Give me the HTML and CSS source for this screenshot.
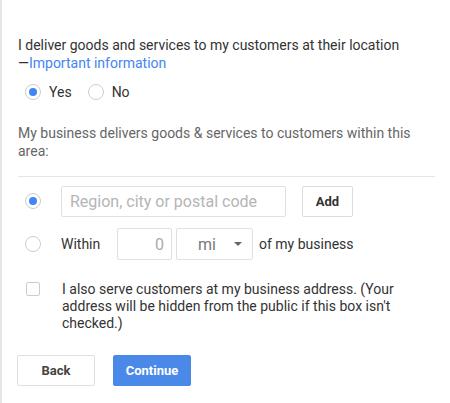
FILE: index.html
```html
<!DOCTYPE html>
<html lang="en">
<head>
  <meta charset="UTF-8" />
  <title>Service area</title>
  <link rel="stylesheet" href="styles.css">
</head>
<body>
  <div class="panel">
    <p class="question">I deliver goods and services to my customers at their location <span class="info">—<a href="#">Important information</a></span></p>

    <div class="choice-row">
      <label class="choice"><span class="radio checked"></span>Yes</label>
      <label class="choice"><span class="radio"></span>No</label>
    </div>

    <p class="hint">My business delivers goods &amp; services to customers within this area:</p>

    <div class="divider"></div>

    <div class="area-row">
      <span class="radio checked"></span>
      <input class="region" type="text" placeholder="Region, city or postal code" />
      <button class="btn add">Add</button>
    </div>

    <div class="area-row">
      <span class="radio"></span>
      <span class="within">Within</span>
      <input class="distance" type="text" value="0" />
      <div class="unit">mi <span class="caret"></span></div>
      <span class="suffix">of my business</span>
    </div>

    <div class="check-row">
      <span class="checkbox"></span>
      <p>I also serve customers at my business address. (Your address will be hidden from the public if this box isn't checked.)</p>
    </div>

    <div class="actions">
      <button class="btn back">Back</button>
      <button class="btn primary">Continue</button>
    </div>
  </div>
</body>
</html>
```

FILE: styles.css
```css
body {
  margin: 0;
  font-family: Roboto, 'Noto Sans', sans-serif;
  color: #333;
  background: #fff;
}
.panel {
  border-left: 2px solid #e6e6e6;
  min-height: 403px;
  box-sizing: border-box;
  padding: 36px 14px 0 16px;
}
.question {
  margin: 0;
  font-size: 14px;
  line-height: 18px;
  width: 400px;
}
.info {
  white-space: nowrap;
}
.question a {
  color: #4285f4;
  text-decoration: none;
}
.choice-row {
  display: flex;
  gap: 16px;
  margin: 11px 0 0 7px;
  font-size: 14px;
}
.choice {
  display: flex;
  align-items: center;
  gap: 8px;
  height: 18px;
}
.radio {
  width: 14px;
  height: 14px;
  border: 1px solid #ccc;
  border-radius: 50%;
  position: relative;
  flex: none;
}
.radio.checked::after {
  content: "";
  position: absolute;
  left: 3px;
  top: 3px;
  width: 8px;
  height: 8px;
  border-radius: 50%;
  background: #4285f4;
}
.hint {
  margin: 23px 0 0;
  font-size: 14px;
  line-height: 18px;
  color: #666;
}
.divider {
  height: 1px;
  background: #e5e5e5;
  margin: 16px 0 8px;
  width: 417px;
}
.area-row {
  display: flex;
  align-items: center;
  padding-left: 7px;
  height: 32px;
  margin-bottom: 11px;
}
.area-row .radio {
  margin-right: 20px;
}
.region {
  width: 225px;
  height: 31px;
  box-sizing: border-box;
  border: 1px solid #e0e0e0;
  border-radius: 2px;
  font-family: inherit;
  font-size: 16px;
  padding: 0 8px;
  color: #333;
}
.region::placeholder {
  color: #b5b5b5;
}
.btn {
  font-family: inherit;
  font-weight: bold;
  font-size: 13px;
  height: 31px;
  border-radius: 2px;
  cursor: pointer;
}
.add {
  margin-left: 16px;
  width: 51px;
  background: #fff;
  border: 1px solid #dcdcdc;
  color: #333;
}
.within {
  font-size: 14px;
  width: 56px;
}
.distance {
  width: 55px;
  height: 32px;
  box-sizing: border-box;
  border: 1px solid #e0e0e0;
  border-radius: 2px;
  font-family: inherit;
  font-size: 16px;
  text-align: right;
  padding: 0 7px;
  color: #aaa;
}
.unit {
  margin-left: 4px;
  width: 77px;
  height: 32px;
  box-sizing: border-box;
  border: 1px solid #e0e0e0;
  border-radius: 2px;
  display: flex;
  align-items: center;
  justify-content: space-between;
  padding: 0 10px 0 21px;
  font-size: 16px;
  color: #777;
}
.caret {
  width: 0;
  height: 0;
  border-left: 4px solid transparent;
  border-right: 4px solid transparent;
  border-top: 4px solid #666;
}
.suffix {
  margin-left: 6px;
  font-size: 14px;
}
.check-row {
  display: flex;
  align-items: flex-start;
  margin-top: 21px;
  padding-left: 8px;
}
.checkbox {
  width: 12px;
  height: 12px;
  border: 1px solid #ccc;
  border-radius: 2px;
  margin: 1px 22px 0 0;
  flex: none;
}
.check-row p {
  margin: 0;
  font-size: 14px;
  line-height: 17px;
  width: 340px;
}
.actions {
  display: flex;
  gap: 18px;
  margin: 23px 0 0 -1px;
}
.back {
  width: 78px;
  background: #fff;
  border: 1px solid #e0e0e0;
  color: #444;
}
.primary {
  width: 78px;
  background: #4a89e8;
  border: 1px solid #4a89e8;
  color: #fff;
}
```
